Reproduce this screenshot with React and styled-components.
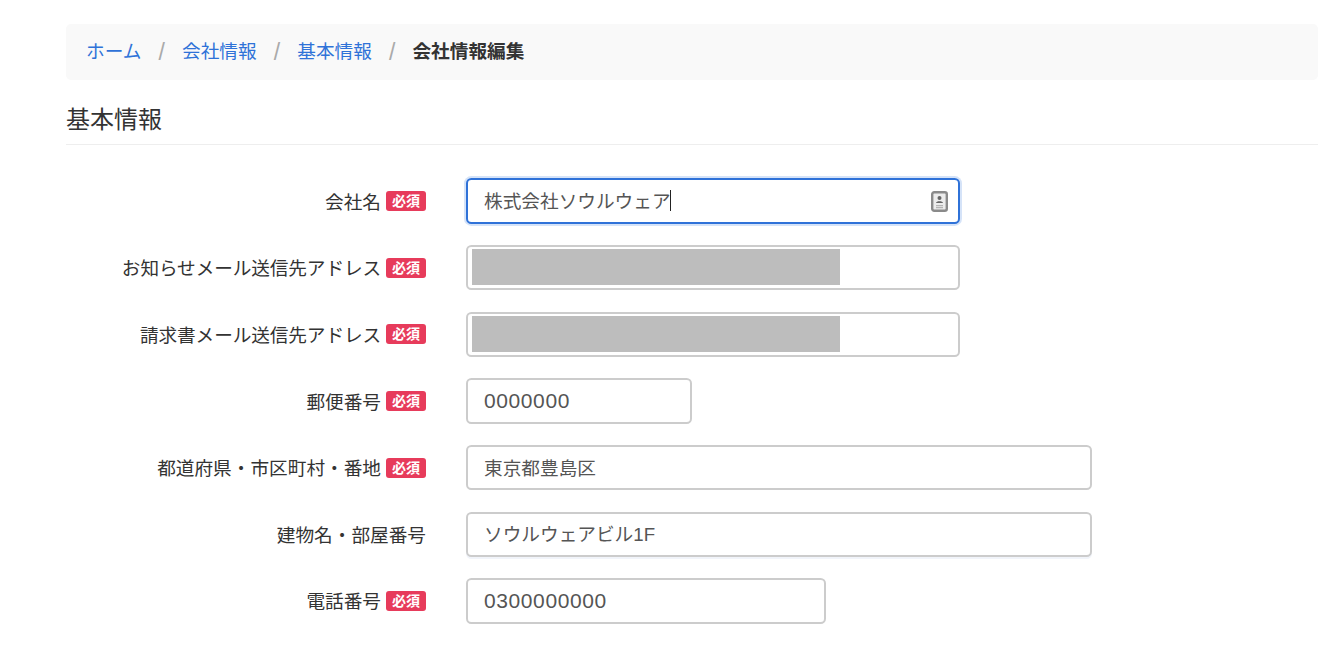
import styled, { createGlobalStyle } from 'styled-components';

const GlobalStyle = createGlobalStyle`
  html, body {
    margin: 0;
    padding: 0;
    background: #fff;
    overflow: hidden;
  }
  body {
    font-family: "Liberation Sans", "Noto Sans CJK JP", sans-serif;
    font-size: 18.67px;
    color: #333;
  }
`;

const Page = styled.div`
  padding: 24px 0 0 66px;
`;

const Breadcrumb = styled.ol`
  display: flex;
  align-items: center;
  height: 56px;
  margin: 0;
  padding: 0 20px 5px;
  list-style: none;
  background: #f9f9f9;
  border-radius: 5px;
  box-sizing: border-box;
`;

const Crumb = styled.li`
  display: flex;
  align-items: center;
  font-weight: ${({ $active }) => ($active ? 700 : 400)};
  color: ${({ $active }) => ($active ? '#333' : '#2f72d8')};

  &:not(:first-child)::before {
    content: '/';
    width: 40.6px;
    margin-top: 5px;
    text-align: center;
    font-size: 23px;
    font-weight: 400;
    line-height: 1;
    color: #aaaaaa;
  }
`;

const Title = styled.h2`
  margin: 0 0 33.4px;
  padding: 23px 0 8px;
  height: 65px;
  box-sizing: border-box;
  font-size: 24px;
  font-weight: 400;
  line-height: 34px;
  color: #333;
  border-bottom: 1px solid #eeeeee;
`;

const Form = styled.form`
  display: flex;
  flex-direction: column;
  gap: 21.33px;
`;

const Row = styled.div`
  display: flex;
  align-items: center;
  gap: 40px;
`;

const Label = styled.label`
  display: flex;
  justify-content: flex-end;
  align-items: center;
  gap: 5px;
  width: 360px;
  flex-shrink: 0;
  color: #333;
`;

const LabelText = styled.span`
  position: relative;
  top: -1px;
  letter-spacing: ${({ $tight }) => ($tight ? '-0.12px' : '0')};
`;

const Required = styled.span`
  display: inline-flex;
  align-items: center;
  justify-content: center;
  width: 40px;
  height: 20px;
  border-radius: 3px;
  background: #e73b5b;
  color: #fff;
  font-size: 14px;
  font-weight: 700;
  line-height: 1;
`;

const FieldWrap = styled.div`
  position: relative;
  width: ${({ $width }) => $width}px;
  height: 45.33px;
`;

const Input = styled.input`
  display: block;
  width: 100%;
  height: 100%;
  box-sizing: border-box;
  padding: 0 16px ${({ $numeric }) => ($numeric ? '0' : '3px')};
  font-family: inherit;
  font-size: ${({ $numeric }) => ($numeric ? '21px' : '18.67px')};
  letter-spacing: ${({ $numeric }) => ($numeric ? '0.6px' : '0')};
  color: #555;
  background: #fff;
  border: 2px solid ${({ $focused }) => ($focused ? '#2f72d8' : '#cccccc')};
  border-radius: 5.33px;
  outline: none;
  box-shadow: ${({ $focused, $underline }) => {
    if ($focused) return '0 0 0 2px #d5e3f8';
    return $underline ? '0 2px 0 #f1f4fa' : 'none';
  }};
`;

const Caret = styled.span`
  position: absolute;
  left: 204px;
  top: 12px;
  width: 1px;
  height: 21px;
  background: #222;
`;

const Redaction = styled.div`
  position: absolute;
  left: 6px;
  top: 4px;
  width: 368px;
  height: 36px;
  background: #bdbdbd;
`;

const CardIcon = styled.svg`
  position: absolute;
  right: 12px;
  top: 13px;
  width: 17px;
  height: 21px;
`;

const fields = [
  { label: '会社名', required: true, width: 494, value: '株式会社ソウルウェア', focused: true },
  { label: 'お知らせメール送信先アドレス', required: true, width: 494, redacted: true, tight: true },
  { label: '請求書メール送信先アドレス', required: true, width: 494, redacted: true, tight: true },
  { label: '郵便番号', required: true, width: 226, value: '0000000', numeric: true },
  { label: '都道府県・市区町村・番地', required: true, width: 626, value: '東京都豊島区' },
  { label: '建物名・部屋番号', width: 626, value: 'ソウルウェアビル1F', underline: true },
  { label: '電話番号', required: true, width: 360, value: '0300000000', numeric: true },
];

const App = () => (
  <>
    <GlobalStyle />
    <Page>
      <Breadcrumb>
        <Crumb>ホーム</Crumb>
        <Crumb>会社情報</Crumb>
        <Crumb>基本情報</Crumb>
        <Crumb $active>会社情報編集</Crumb>
      </Breadcrumb>
      <Title>基本情報</Title>
      <Form>
        {fields.map((f) => (
          <Row key={f.label}>
            <Label>
              <LabelText $tight={f.tight}>{f.label}</LabelText>
              {f.required && <Required>必須</Required>}
            </Label>
            <FieldWrap $width={f.width}>
              <Input
                readOnly
                value={f.value || ''}
                $focused={f.focused}
                $numeric={f.numeric}
                $underline={f.underline}
                aria-label={f.label}
              />
              {f.redacted && <Redaction />}
              {f.focused && <Caret />}
              {f.focused && (
                <CardIcon viewBox="0 0 17 21">
                  <rect x="1.2" y="1.2" width="14.6" height="18.6" rx="2" fill="#ececec" stroke="#8a8a8a" strokeWidth="2.4" />
                  <circle cx="8.5" cy="7" r="2" fill="#666" />
                  <path d="M5 12c0-2.4 7-2.4 7 0z" fill="#666" />
                  <path d="M5 14.6h7M5 16.6h7" stroke="#b5b5b5" strokeWidth="1.2" />
                </CardIcon>
              )}
            </FieldWrap>
          </Row>
        ))}
      </Form>
    </Page>
  </>
);

export default App;
